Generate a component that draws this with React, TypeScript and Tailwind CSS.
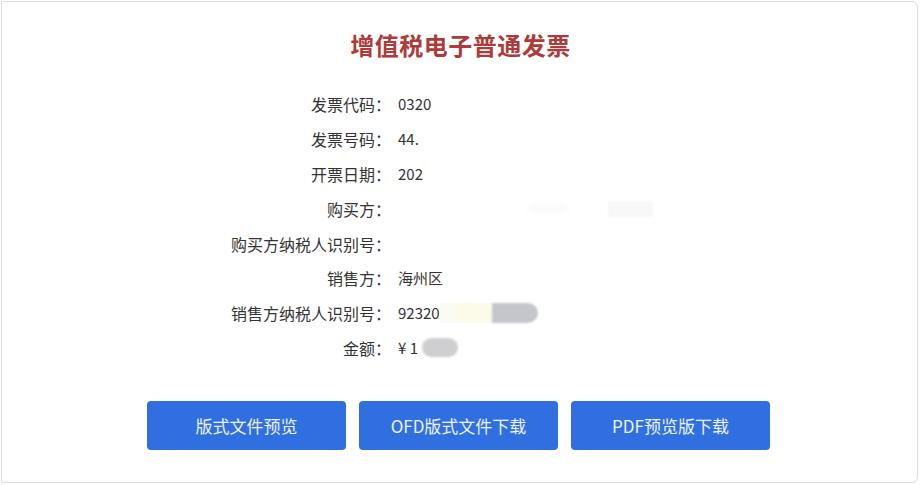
import React from "react";

const cjk = { fontFamily: '"Noto Sans CJK SC", "Liberation Sans", sans-serif' };

interface Row {
    label: string;
    value: React.ReactNode;
}

const rows: Row[] = [
    { label: "发票代码", value: "0320" },
    { label: "发票号码", value: "44." },
    { label: "开票日期", value: "202" },
    {
        label: "购买方",
        value: (
            <span className="flex items-center gap-[40px] pl-[130px]">
                <span className="h-[10px] w-[40px] rounded bg-[#fafafa] blur-[2px]" />
                <span className="h-[16px] w-[45px] bg-[#f8f8f8] blur-[1px]" />
            </span>
        ),
    },
    { label: "购买方纳税人识别号", value: "" },
    { label: "销售方", value: "海州区" },
    {
        label: "销售方纳税人识别号",
        value: (
            <span className="flex items-center">
                <span>92320</span>
                <span className="h-[20px] w-[14px] bg-[#fbfbf6]" />
                <span className="h-[20px] w-[38px] bg-[#fcfbea] blur-[0.5px]" />
                <span className="h-[20px] w-[46px] rounded-r-[10px] bg-[#c4c6cc] blur-[1px]" />
            </span>
        ),
    },
    {
        label: "金额",
        value: (
            <span className="flex items-center">
                <span>¥ 1</span>
                <span className="ml-[4px] h-[19px] w-[36px] rounded-full bg-[#cfcfd1] blur-[1px]" />
            </span>
        ),
    },
];

const buttons = ["版式文件预览", "OFD版式文件下载", "PDF预览版下载"];

export default function App() {
    return (
        <div className="h-[485px] w-[922px] bg-white p-[1px]">
            <div className="flex h-[482px] w-[917px] flex-col rounded-tr-md rounded-br-md border border-[#dcdcdc] bg-white">
                <h1
                    className="mt-[27px] pl-[2px] text-center text-[24px] font-semibold leading-[32px] tracking-[0.5px] text-[#ae3a3a]"
                    style={cjk}
                >
                    增值税电子普通发票
                </h1>

                <div className="mt-[26px] flex flex-col">
                    {rows.map((row) => (
                        <div key={row.label} className="flex h-[34.8px] items-center">
                            <div
                                className="w-[389px] text-right text-[16px] text-[#333]"
                                style={cjk}
                            >
                                {row.label}：
                            </div>
                            <div
                                className="ml-[7px] text-[15px] text-[#333]"
                                style={cjk}
                            >
                                {row.value}
                            </div>
                        </div>
                    ))}
                </div>

                <div className="mt-[36px] flex justify-center gap-[13px] pr-[2px]">
                    {buttons.map((b) => (
                        <div
                            key={b}
                            className="flex h-[49px] w-[199px] items-center justify-center rounded-[4px] bg-[#306fe0] text-[17px] text-[#eef2ff]"
                            style={cjk}
                        >
                            {b}
                        </div>
                    ))}
                </div>
            </div>
        </div>
    );
}
